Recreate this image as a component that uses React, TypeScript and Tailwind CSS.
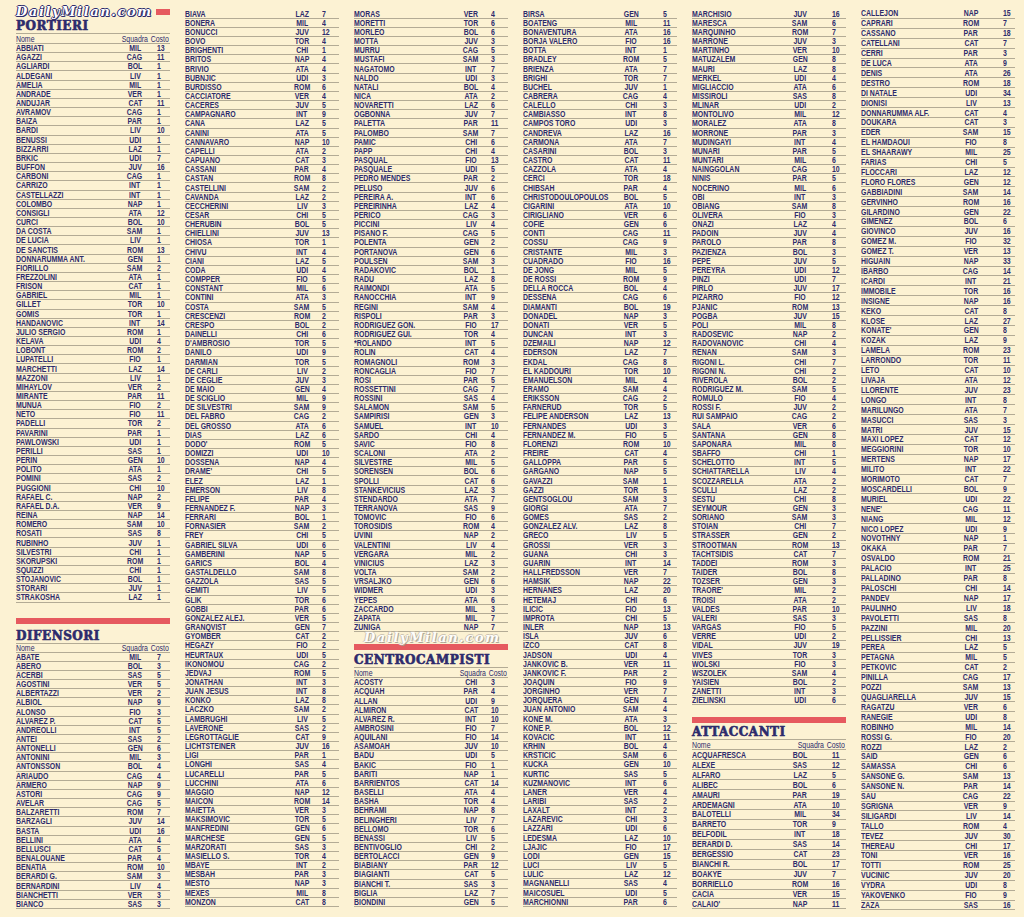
import clsx from 'clsx';

type Player = { name: string; team: string; cost: string };

function parse(block: string): Player[] {
  return block
    .trim()
    .split('\n')
    .map((line) => {
      const parts = line.trim().split(' ');
      const cost = parts.pop() ?? '';
      const team = parts.pop() ?? '';
      return { name: parts.join(' '), team, cost };
    });
}

const portieri = parse(`
ABBIATI MIL 13
AGAZZI CAG 11
AGLIARDI BOL 1
ALDEGANI LIV 1
AMELIA MIL 1
ANDRADE VER 1
ANDUJAR CAT 11
AVRAMOV CAG 1
BAIZA PAR 1
BARDI LIV 10
BENUSSI UDI 1
BIZZARRI LAZ 1
BRKIC UDI 7
BUFFON JUV 16
CARBONI CAG 1
CARRIZO INT 1
CASTELLAZZI INT 1
COLOMBO NAP 1
CONSIGLI ATA 12
CURCI BOL 10
DA COSTA SAM 1
DE LUCIA LIV 1
DE SANCTIS ROM 13
DONNARUMMA ANT. GEN 1
FIORILLO SAM 2
FREZZOLINI ATA 1
FRISON CAT 1
GABRIEL MIL 1
GILLET TOR 10
GOMIS TOR 1
HANDANOVIC INT 14
JULIO SERGIO ROM 1
KELAVA UDI 4
LOBONT ROM 2
LUPATELLI FIO 1
MARCHETTI LAZ 14
MAZZONI LIV 1
MIHAYLOV VER 2
MIRANTE PAR 11
MUNUA FIO 2
NETO FIO 11
PADELLI TOR 2
PAVARINI PAR 1
PAWLOWSKI UDI 1
PERILLI SAS 1
PERIN GEN 10
POLITO ATA 1
POMINI SAS 2
PUGGIONI CHI 10
RAFAEL C. NAP 2
RAFAEL D.A. VER 9
REINA NAP 14
ROMERO SAM 10
ROSATI SAS 8
RUBINHO JUV 1
SILVESTRI CHI 1
SKORUPSKI ROM 1
SQUIZZI CHI 1
STOJANOVIC BOL 1
STORARI JUV 1
STRAKOSHA LAZ 1
`);

const difensori1 = parse(`
ABATE MIL 7
ABERO BOL 3
ACERBI SAS 5
AGOSTINI VER 5
ALBERTAZZI VER 2
ALBIOL NAP 9
ALONSO FIO 3
ALVAREZ P. CAT 5
ANDREOLLI INT 5
ANTEI SAS 2
ANTONELLI GEN 6
ANTONINI MIL 3
ANTONSSON BOL 4
ARIAUDO CAG 4
ARMERO NAP 9
ASTORI CAG 9
AVELAR CAG 5
BALZARETTI ROM 7
BARZAGLI JUV 14
BASTA UDI 16
BELLINI ATA 4
BELLUSCI CAT 5
BENALOUANE PAR 4
BENATIA ROM 10
BERARDI G. SAM 3
BERNARDINI LIV 4
BIANCHETTI VER 3
BIANCO SAS 3
`);

const difensori2 = parse(`
BIAVA LAZ 7
BONERA MIL 4
BONUCCI JUV 12
BOVO TOR 4
BRIGHENTI CHI 1
BRITOS NAP 4
BRIVIO ATA 4
BUBNJIC UDI 3
BURDISSO ROM 6
CACCIATORE VER 4
CACERES JUV 5
CAMPAGNARO INT 9
CANA LAZ 5
CANINI ATA 5
CANNAVARO NAP 10
CAPELLI ATA 2
CAPUANO CAT 3
CASSANI PAR 4
CASTAN ROM 8
CASTELLINI SAM 2
CAVANDA LAZ 2
CECCHERINI LIV 3
CESAR CHI 5
CHERUBIN BOL 5
CHIELLINI JUV 13
CHIOSA TOR 1
CHIVU INT 4
CIANI LAZ 5
CODA UDI 4
COMPPER FIO 5
CONSTANT MIL 6
CONTINI ATA 3
COSTA SAM 5
CRESCENZI ROM 2
CRESPO BOL 2
DAINELLI CHI 6
D'AMBROSIO TOR 5
DANILO UDI 9
DARMIAN TOR 5
DE CARLI LIV 2
DE CEGLIE JUV 3
DE MAIO GEN 4
DE SCIGLIO MIL 9
DE SILVESTRI SAM 9
DEL FABRO CAG 2
DEL GROSSO ATA 6
DIAS LAZ 6
DODO' ROM 5
DOMIZZI UDI 10
DOSSENA NAP 4
DRAME' CHI 5
ELEZ LAZ 1
EMERSON LIV 8
FELIPE PAR 4
FERNANDEZ F. NAP 3
FERRARI BOL 1
FORNASIER SAM 2
FREY CHI 5
GABRIEL SILVA UDI 6
GAMBERINI NAP 5
GARICS BOL 4
GASTALDELLO SAM 8
GAZZOLA SAS 5
GEMITI LIV 5
GLIK TOR 6
GOBBI PAR 6
GONZALEZ ALEJ. VER 5
GRANQVIST GEN 7
GYOMBER CAT 2
HEGAZY FIO 2
HEURTAUX UDI 5
IKONOMOU CAG 2
JEDVAJ ROM 5
JONATHAN INT 3
JUAN JESUS INT 8
KONKO LAZ 8
LACZKO SAM 2
LAMBRUGHI LIV 5
LAVERONE SAS 2
LEGROTTAGLIE CAT 9
LICHTSTEINER JUV 16
LIGI PAR 1
LONGHI SAS 4
LUCARELLI PAR 5
LUCCHINI ATA 6
MAGGIO NAP 12
MAICON ROM 14
MAIETTA VER 3
MAKSIMOVIC TOR 5
MANFREDINI GEN 6
MARCHESE GEN 5
MARZORATI SAS 3
MASIELLO S. TOR 4
MBAYE INT 2
MESBAH PAR 3
MESTO NAP 3
MEXES MIL 8
MONZON CAT 8
`);

const difensori3 = parse(`
MORAS VER 4
MORETTI TOR 6
MORLEO BOL 6
MOTTA JUV 3
MURRU CAG 5
MUSTAFI SAM 3
NAGATOMO INT 7
NALDO UDI 3
NATALI BOL 4
NICA ATA 2
NOVARETTI LAZ 6
OGBONNA JUV 7
PALETTA PAR 11
PALOMBO SAM 7
PAMIC CHI 6
PAPP CHI 4
PASQUAL FIO 13
PASQUALE UDI 5
PEDRO MENDES PAR 2
PELUSO JUV 6
PEREIRA A. INT 6
PEREIRINHA LAZ 4
PERICO CAG 3
PICCINI LIV 4
PISANO F. CAG 5
POLENTA GEN 2
PORTANOVA GEN 6
POULSEN SAM 3
RADAKOVIC BOL 1
RADU LAZ 8
RAIMONDI ATA 5
RANOCCHIA INT 9
REGINI SAM 4
RISPOLI PAR 3
RODRIGUEZ GON. FIO 17
RODRIGUEZ GUI. TOR 4
*ROLANDO INT 5
ROLIN CAT 4
ROMAGNOLI ROM 3
RONCAGLIA FIO 7
ROSI PAR 5
ROSSETTINI CAG 7
ROSSINI SAS 4
SALAMON SAM 5
SAMPIRISI GEN 3
SAMUEL INT 10
SARDO CHI 4
SAVIC FIO 8
SCALONI ATA 2
SILVESTRE MIL 5
SORENSEN BOL 6
SPOLLI CAT 6
STANKEVICIUS LAZ 3
STENDARDO ATA 7
TERRANOVA SAS 9
TOMOVIC FIO 6
TOROSIDIS ROM 4
UVINI NAP 2
VALENTINI LIV 4
VERGARA MIL 2
VINICIUS LAZ 3
VOLTA SAM 2
VRSALJKO GEN 6
WIDMER UDI 3
YEPES ATA 6
ZACCARDO MIL 3
ZAPATA MIL 7
ZUNIGA NAP 7
`);

const centro1 = parse(`
ACOSTY CHI 3
ACQUAH PAR 4
ALLAN UDI 9
ALMIRON CAT 10
ALVAREZ R. INT 10
AMBROSINI FIO 7
AQUILANI FIO 14
ASAMOAH JUV 10
BADU UDI 5
BAKIC FIO 1
BARITI NAP 1
BARRIENTOS CAT 14
BASELLI ATA 4
BASHA TOR 4
BEHRAMI NAP 8
BELINGHERI LIV 7
BELLOMO TOR 6
BENASSI LIV 5
BENTIVOGLIO CHI 2
BERTOLACCI GEN 9
BIABIANY PAR 12
BIAGIANTI CAT 5
BIANCHI T. SAS 3
BIGLIA LAZ 7
BIONDINI GEN 5
`);

const centro2 = parse(`
BIRSA GEN 5
BOATENG MIL 11
BONAVENTURA ATA 16
BORJA VALERO FIO 16
BOTTA INT 1
BRADLEY ROM 5
BRIENZA ATA 7
BRIGHI TOR 7
BUCHEL JUV 1
CABRERA CAG 4
CALELLO CHI 3
CAMBIASSO INT 8
CAMPOS TORO UDI 3
CANDREVA LAZ 16
CARMONA ATA 7
CASARINI BOL 3
CASTRO CAT 11
CAZZOLA ATA 4
CERCI TOR 18
CHIBSAH PAR 4
CHRISTODOULOPOULOS BOL 5
CIGARINI ATA 10
CIRIGLIANO VER 6
COFIE GEN 6
CONTI CAG 11
COSSU CAG 9
CRISTANTE MIL 3
CUADRADO FIO 16
DE JONG MIL 5
DE ROSSI ROM 9
DELLA ROCCA BOL 4
DESSENA CAG 6
DIAMANTI BOL 19
DONADEL NAP 3
DONATI VER 5
DUNCAN INT 3
DZEMAILI NAP 12
EDERSON LAZ 7
EKDAL CAG 8
EL KADDOURI TOR 10
EMANUELSON MIL 4
ERAMO SAM 4
ERIKSSON CAG 2
FARNERUD TOR 5
FELIPE ANDERSON LAZ 13
FERNANDES UDI 3
FERNANDEZ M. FIO 5
FLORENZI ROM 10
FREIRE CAT 4
GALLOPPA PAR 5
GARGANO NAP 5
GAVAZZI SAM 1
GAZZI TOR 5
GENTSOGLOU SAM 3
GIORGI ATA 7
GOMES SAS 2
GONZALEZ ALV. LAZ 8
GRECO LIV 5
GROSSI VER 3
GUANA CHI 3
GUARIN INT 14
HALLFREDSSON VER 7
HAMSIK NAP 22
HERNANES LAZ 20
HETEMAJ CHI 6
ILICIC FIO 13
IMPROTA CHI 5
INLER NAP 13
ISLA JUV 6
IZCO CAT 8
JADSON UDI 4
JANKOVIC B. VER 11
JANKOVIC F. PAR 2
JOAQUIN FIO 9
JORGINHO VER 7
JORQUERA GEN 4
JUAN ANTONIO SAM 4
KONE M. ATA 3
KONE P. BOL 12
KOVACIC INT 11
KRHIN BOL 4
KRSTICIC SAM 6
KUCKA GEN 10
KURTIC SAS 5
KUZMANOVIC INT 6
LANER VER 4
LARIBI SAS 2
LAXALT INT 2
LAZAREVIC CHI 3
LAZZARI UDI 6
LEDESMA LAZ 10
LJAJIC FIO 17
LODI GEN 15
LUCI LIV 5
LULIC LAZ 12
MAGNANELLI SAS 4
MAICOSUEL UDI 5
MARCHIONNI PAR 6
`);

const centro3 = parse(`
MARCHISIO JUV 16
MARESCA SAM 6
MARQUINHO ROM 7
MARRONE JUV 3
MARTINHO VER 10
MATUZALEM GEN 8
MAURI LAZ 8
MERKEL UDI 4
MIGLIACCIO ATA 6
MISSIROLI SAS 8
MLINAR UDI 2
MONTOLIVO MIL 12
MORALEZ ATA 8
MORRONE PAR 3
MUDINGAYI INT 4
MUNARI PAR 5
MUNTARI MIL 6
NAINGGOLAN CAG 10
NINIS PAR 5
NOCERINO MIL 6
OBI INT 3
OBIANG SAM 8
OLIVERA FIO 3
ONAZI LAZ 4
PADOIN JUV 4
PAROLO PAR 8
PAZIENZA BOL 3
PEPE JUV 5
PEREYRA UDI 12
PINZI UDI 7
PIRLO JUV 17
PIZARRO FIO 12
PJANIC ROM 13
POGBA JUV 15
POLI MIL 8
RADOSEVIC NAP 2
RADOVANOVIC CHI 4
RENAN SAM 3
RIGONI L. CHI 7
RIGONI N. CHI 2
RIVEROLA BOL 2
RODRIGUEZ M. SAM 5
ROMULO FIO 4
ROSSI F. JUV 2
RUI SAMPAIO CAG 2
SALA VER 6
SANTANA GEN 8
SAPONARA MIL 8
SBAFFO CHI 1
SCHELOTTO INT 5
SCHIATTARELLA LIV 4
SCOZZARELLA ATA 2
SCULLI LAZ 2
SESTU CHI 8
SEYMOUR GEN 3
SORIANO SAM 3
STOIAN CHI 7
STRASSER GEN 2
STROOTMAN ROM 13
TACHTSIDIS CAT 7
TADDEI ROM 3
TAIDER BOL 8
TOZSER GEN 3
TRAORE' MIL 2
TROISI ATA 2
VALDES PAR 10
VALERI SAS 3
VARGAS FIO 5
VERRE UDI 2
VIDAL JUV 19
VIVES TOR 3
WOLSKI FIO 3
WSZOLEK SAM 4
YAISIEN BOL 2
ZANETTI INT 3
ZIELINSKI UDI 6
`);

const attacco1 = parse(`
ACQUAFRESCA BOL 11
ALEXE SAS 12
ALFARO LAZ 5
ALIBEC BOL 6
AMAURI PAR 19
ARDEMAGNI ATA 10
BALOTELLI MIL 34
BARRETO TOR 9
BELFODIL INT 18
BERARDI D. SAS 14
BERGESSIO CAT 23
BIANCHI R. BOL 17
BOAKYE JUV 7
BORRIELLO ROM 16
CACIA VER 15
CALAIO' NAP 11
`);

const attacco2 = parse(`
CALLEJON NAP 15
CAPRARI ROM 7
CASSANO PAR 18
CATELLANI CAT 7
CERRI PAR 3
DE LUCA ATA 9
DENIS ATA 26
DESTRO ROM 18
DI NATALE UDI 34
DIONISI LIV 13
DONNARUMMA ALF. CAT 4
DOUKARA CAT 3
EDER SAM 15
EL HAMDAOUI FIO 8
EL SHAARAWY MIL 25
FARIAS CHI 5
FLOCCARI LAZ 12
FLORO FLORES GEN 12
GABBIADINI SAM 14
GERVINHO ROM 16
GILARDINO GEN 22
GIMENEZ BOL 6
GIOVINCO JUV 16
GOMEZ M. FIO 32
GOMEZ T. VER 13
HIGUAIN NAP 33
IBARBO CAG 14
ICARDI INT 21
IMMOBILE TOR 16
INSIGNE NAP 16
KEKO CAT 8
KLOSE LAZ 27
KONATE' GEN 8
KOZAK LAZ 9
LAMELA ROM 23
LARRONDO TOR 11
LETO CAT 10
LIVAJA ATA 12
LLORENTE JUV 23
LONGO INT 8
MARILUNGO ATA 7
MASUCCI SAS 3
MATRI JUV 15
MAXI LOPEZ CAT 12
MEGGIORINI TOR 10
MERTENS NAP 17
MILITO INT 22
MORIMOTO CAT 7
MOSCARDELLI BOL 9
MURIEL UDI 22
NENE' CAG 11
NIANG MIL 12
NICO LOPEZ UDI 9
NOVOTHNY NAP 1
OKAKA PAR 7
OSVALDO ROM 21
PALACIO INT 25
PALLADINO PAR 8
PALOSCHI CHI 14
PANDEV NAP 17
PAULINHO LIV 18
PAVOLETTI SAS 8
PAZZINI MIL 20
PELLISSIER CHI 13
PEREA LAZ 5
PETAGNA MIL 5
PETKOVIC CAT 2
PINILLA CAG 17
POZZI SAM 13
QUAGLIARELLA JUV 15
RAGATZU VER 6
RANEGIE UDI 8
ROBINHO MIL 14
ROSSI G. FIO 20
ROZZI LAZ 2
SAID GEN 6
SAMASSA CHI 6
SANSONE G. SAM 13
SANSONE N. PAR 14
SAU CAG 22
SGRIGNA VER 9
SILIGARDI LIV 14
TALLO ROM 4
TEVEZ JUV 30
THEREAU CHI 17
TONI VER 16
TOTTI ROM 25
VUCINIC JUV 20
VYDRA UDI 8
YAKOVENKO FIO 9
ZAZA SAS 16
`);

// row heights: the first three roles are packed tighter than the strikers
const TIGHT = 'h-[9.17px]';
const LOOSE = 'h-[9.94px]';

// the print uses a condensed grotesque; squeeze Liberation Sans to its width
function Narrow({ children, className }: { children: string; className?: string }) {
  return <span className={clsx('inline-block scale-x-[0.73]', className)}>{children}</span>;
}

function Rows({ players, cols, row }: { players: Player[]; cols: string; row: string }) {
  return (
    <>
      {players.map((p) => (
        <div
          key={p.name}
          className={clsx(
            'grid items-center border-b border-[#b3ab95] whitespace-nowrap font-bold text-[9.5px] leading-[8px]',
            cols,
            row
          )}
        >
          <span>
            <Narrow className="origin-left">{p.name}</Narrow>
          </span>
          <span className="text-center">
            <Narrow className="origin-center">{p.team}</Narrow>
          </span>
          <span>
            <Narrow className="origin-left">{p.cost}</Narrow>
          </span>
        </div>
      ))}
    </>
  );
}

function Heading({ children, className }: { children: string; className?: string }) {
  return (
    <div
      className={clsx(
        "h-[13px] whitespace-nowrap font-['DejaVu_Serif',serif] text-[12px] font-bold leading-[13px] tracking-[0.5px] [-webkit-text-stroke:0.6px_#2d2b6c]",
        className
      )}
    >
      {children}
    </div>
  );
}

function TableHead({ className }: { className?: string }) {
  return (
    <div
      className={clsx(
        'flex items-center whitespace-nowrap border-y border-[#b3ab95] text-[9.5px] font-normal leading-[8px]',
        className
      )}
    >
      <span className="flex-1">
        <Narrow className="origin-left">Nome</Narrow>
      </span>
      <Narrow className="origin-right">Squadra</Narrow>
      <Narrow className="ml-[-4px] mr-[1px] origin-right">Costo</Narrow>
    </div>
  );
}

function RedBar({ className }: { className?: string }) {
  return <div className={clsx('h-[6px] bg-[#e65a5f]', className)} />;
}

function Logo({ className }: { className?: string }) {
  return (
    <span
      className={clsx(
        "whitespace-nowrap font-['DejaVu_Serif',serif] text-[13px] font-bold italic tracking-[1.6px] text-white",
        className
      )}
    >
      DailyMilan.com
    </span>
  );
}

export default function App() {
  return (
    <div className="h-[917px] w-[1024px] overflow-hidden bg-[#fcf2d3] font-['Liberation_Sans',Arial,sans-serif] text-[#2d2b6c]">
      <div className="grid grid-cols-[repeat(6,154px)] gap-x-[15px] pl-[16px]">
        {/* Portieri + difensori A-B */}
        <div className="flex flex-col pt-[5px]">
          <div className="flex h-[14px] items-center">
            <Logo className="leading-[14px] [text-shadow:-1px_0_#2d2b6c,1px_0_#2d2b6c,0_-1px_#2d2b6c,0_1px_#2d2b6c,1px_1px_#2d2b6c]" />
            <RedBar className="ml-[3px] flex-1" />
          </div>
          <Heading className="h-[14px] leading-[14px]">PORTIERI</Heading>
          <TableHead className="h-[11px]" />
          <Rows players={portieri} cols="grid-cols-[minmax(0,1fr)_44px_13px]" row={TIGHT} />
          <RedBar className="mt-[15px]" />
          <Heading className="mt-[6px]">DIFENSORI</Heading>
          <TableHead className="h-[10px]" />
          <Rows players={difensori1} cols="grid-cols-[minmax(0,1fr)_44px_13px]" row={TIGHT} />
        </div>

        <div className="flex flex-col pt-[9.5px]">
          <Rows players={difensori2} cols="grid-cols-[minmax(0,1fr)_40px_17px]" row={TIGHT} />
        </div>

        <div className="flex flex-col pt-[9.5px]">
          <Rows players={difensori3} cols="grid-cols-[minmax(0,1fr)_40px_17px]" row={TIGHT} />
          <div className="flex h-[12px] items-center pl-[10px]">
            <Logo className="leading-[12px] opacity-90 [text-shadow:1px_1px_0_#a59e90,-1px_0_#c9c1b1,0_-1px_#c9c1b1]" />
          </div>
          <RedBar />
          <Heading className="mt-[4px]">CENTROCAMPISTI</Heading>
          <TableHead className="h-[11px]" />
          <Rows players={centro1} cols="grid-cols-[minmax(0,1fr)_40px_17px]" row={TIGHT} />
        </div>

        <div className="flex flex-col pt-[9.5px]">
          <Rows players={centro2} cols="grid-cols-[minmax(0,1fr)_64px_14px]" row={TIGHT} />
        </div>

        <div className="flex flex-col pt-[9.5px]">
          <Rows players={centro3} cols="grid-cols-[minmax(0,1fr)_64px_14px]" row={TIGHT} />
          <RedBar className="mt-[12px]" />
          <Heading className="mt-[3px]">ATTACCANTI</Heading>
          <TableHead className="h-[11px]" />
          <Rows players={attacco1} cols="grid-cols-[minmax(0,1fr)_64px_14px]" row={LOOSE} />
        </div>

        <div className="flex flex-col pt-[9px]">
          <Rows players={attacco2} cols="grid-cols-[minmax(0,1fr)_64px_12px]" row="h-[9.92px]" />
        </div>
      </div>
    </div>
  );
}
